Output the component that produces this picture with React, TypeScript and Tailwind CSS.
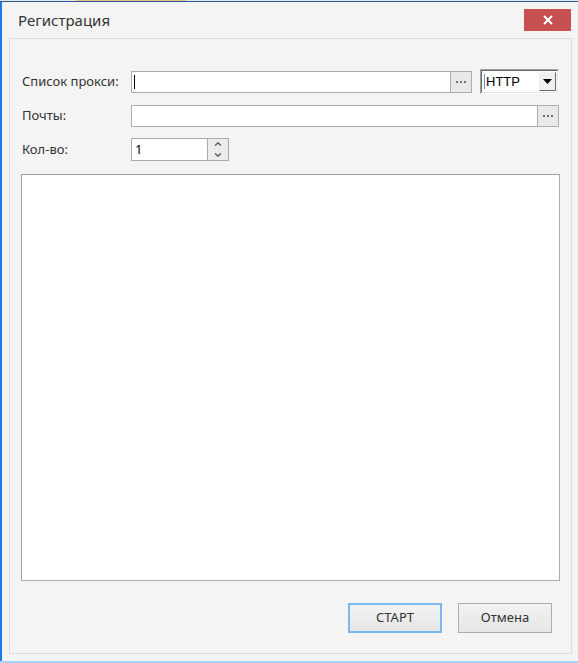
import { ChevronDown, ChevronUp } from "lucide-react";

const font = "font-['Segoe_UI','Noto_Sans','Open_Sans',sans-serif]";

const DotsButton = ({ className = "" }: { className?: string }) => (
  <div
    className={`flex h-full w-[21px] items-center justify-center gap-[2px] border border-l-0 border-[#acacac] bg-[#e9e9e9] ${className}`}
  >
    <span className="h-[2px] w-[2px] bg-[#707070]" />
    <span className="h-[2px] w-[2px] bg-[#707070]" />
    <span className="h-[2px] w-[2px] bg-[#707070]" />
  </div>
);

const Label = ({ children }: { children: string }) => (
  <div className="w-[110px] shrink-0 pl-[1px] text-[13px] text-[#333]">{children}</div>
);

export default function App() {
  return (
    <div className={`relative h-[663px] w-[578px] overflow-hidden bg-white ${font}`}>
      {/* strip of the window behind */}
      <div className="flex h-[1px] bg-[#e4e4e4]">
        <div className="ml-[76px] w-[110px] bg-[#e9c48a]" />
      </div>
      <div className="h-[1px] bg-[#2b5797]" />

      <div className="flex h-[659px]">
        <div className="w-[2px] bg-[#1a7ae6]" />
        <div className="flex flex-1 flex-col bg-[#f4f4f4]">
          {/* title bar */}
          <div className="flex h-[36px] items-start justify-between">
            <div className="pl-[16px] pt-[8px] text-[15px] leading-[20px] text-[#333]">Регистрация</div>
            <div className="mr-[7px] mt-[7px] flex h-[22px] w-[47px] items-center justify-center bg-[#c75050] text-white">
              <svg width="10" height="10" viewBox="0 0 10 10">
                <path d="M1 1 L9 9 M9 1 L1 9" stroke="white" strokeWidth="2" />
              </svg>
            </div>
          </div>

          {/* group panel */}
          <div className="ml-[7px] mr-[6px] flex h-[616px] flex-col border border-[#dcdcdc] px-[11px] pt-[30px]">
            {/* row 1 */}
            <div className="flex h-[25px] items-center">
              <Label>Список прокси:</Label>
              <div className="flex h-[22px] w-[341px] items-stretch">
                <div className="relative flex-1 border border-[#acacac] bg-white">
                  <div className="absolute left-[2px] top-[3px] h-[14px] w-[1px] bg-black" />
                </div>
                <DotsButton />
              </div>
              <div className="ml-[8px] h-[25px] w-[79px] border border-[#a0a0a0] border-b-white border-r-white">
                <div className="flex h-full items-center border border-[#696969] border-b-[#e3e3e3] border-r-[#e3e3e3] bg-white pl-[2px] pr-[1px]">
                  <div className="h-[15px] w-[1px] bg-[#6a8fd0]" />
                  <span className="flex-1 pl-[1px] font-['Liberation_Sans',Arial,sans-serif] text-[13px] text-black">
                    HTTP
                  </span>
                  <div className="flex h-[19px] w-[17px] items-center justify-center border border-[#f0f0f0] border-b-[#696969] border-r-[#696969] bg-[#f0f0f0]">
                    <svg width="9" height="5" viewBox="0 0 9 5">
                      <path d="M0 0 H9 L4.5 5 Z" fill="black" />
                    </svg>
                  </div>
                </div>
              </div>
            </div>

            {/* row 2 */}
            <div className="mt-[11px] flex h-[22px] items-center">
              <Label>Почты:</Label>
              <div className="flex h-[22px] w-[428px] items-stretch">
                <div className="flex-1 border border-[#acacac] bg-white" />
                <DotsButton />
              </div>
            </div>

            {/* row 3 */}
            <div className="mt-[11px] flex h-[23px] items-center">
              <Label>Кол-во:</Label>
              <div className="flex h-[23px] w-[98px] items-stretch">
                <div className="flex flex-1 items-center border border-[#acacac] bg-white pl-[3px] text-[13px] text-black">
                  1
                </div>
                <div className="flex w-[21px] flex-col items-center justify-center gap-[1px] border border-l-0 border-[#acacac] bg-[#ececec] text-[#555]">
                  <ChevronUp size={10} strokeWidth={3} />
                  <ChevronDown size={10} strokeWidth={3} />
                </div>
              </div>
            </div>

            {/* log area */}
            <div className="mt-[13px] h-[407px] border border-[#adadad] border-l-[#a0a0a0] border-t-[#a0a0a0] bg-white" />

            {/* buttons */}
            <div className="mt-[22px] flex justify-end gap-[16px] pr-[8px]">
              <button className="flex h-[30px] w-[94px] items-center justify-center border-2 border-[#7cb8ee] bg-gradient-to-b from-[#f2f2f2] to-[#e6e6e6] text-[13px] text-[#333]">
                СТАРТ
              </button>
              <button className="flex h-[30px] w-[94px] items-center justify-center border border-[#adadad] bg-gradient-to-b from-[#f2f2f2] to-[#e6e6e6] text-[13px] text-[#333]">
                Отмена
              </button>
            </div>
          </div>
        </div>
      </div>
      <div className="h-[2px] bg-[#a9d2f3]" />
    </div>
  );
}
